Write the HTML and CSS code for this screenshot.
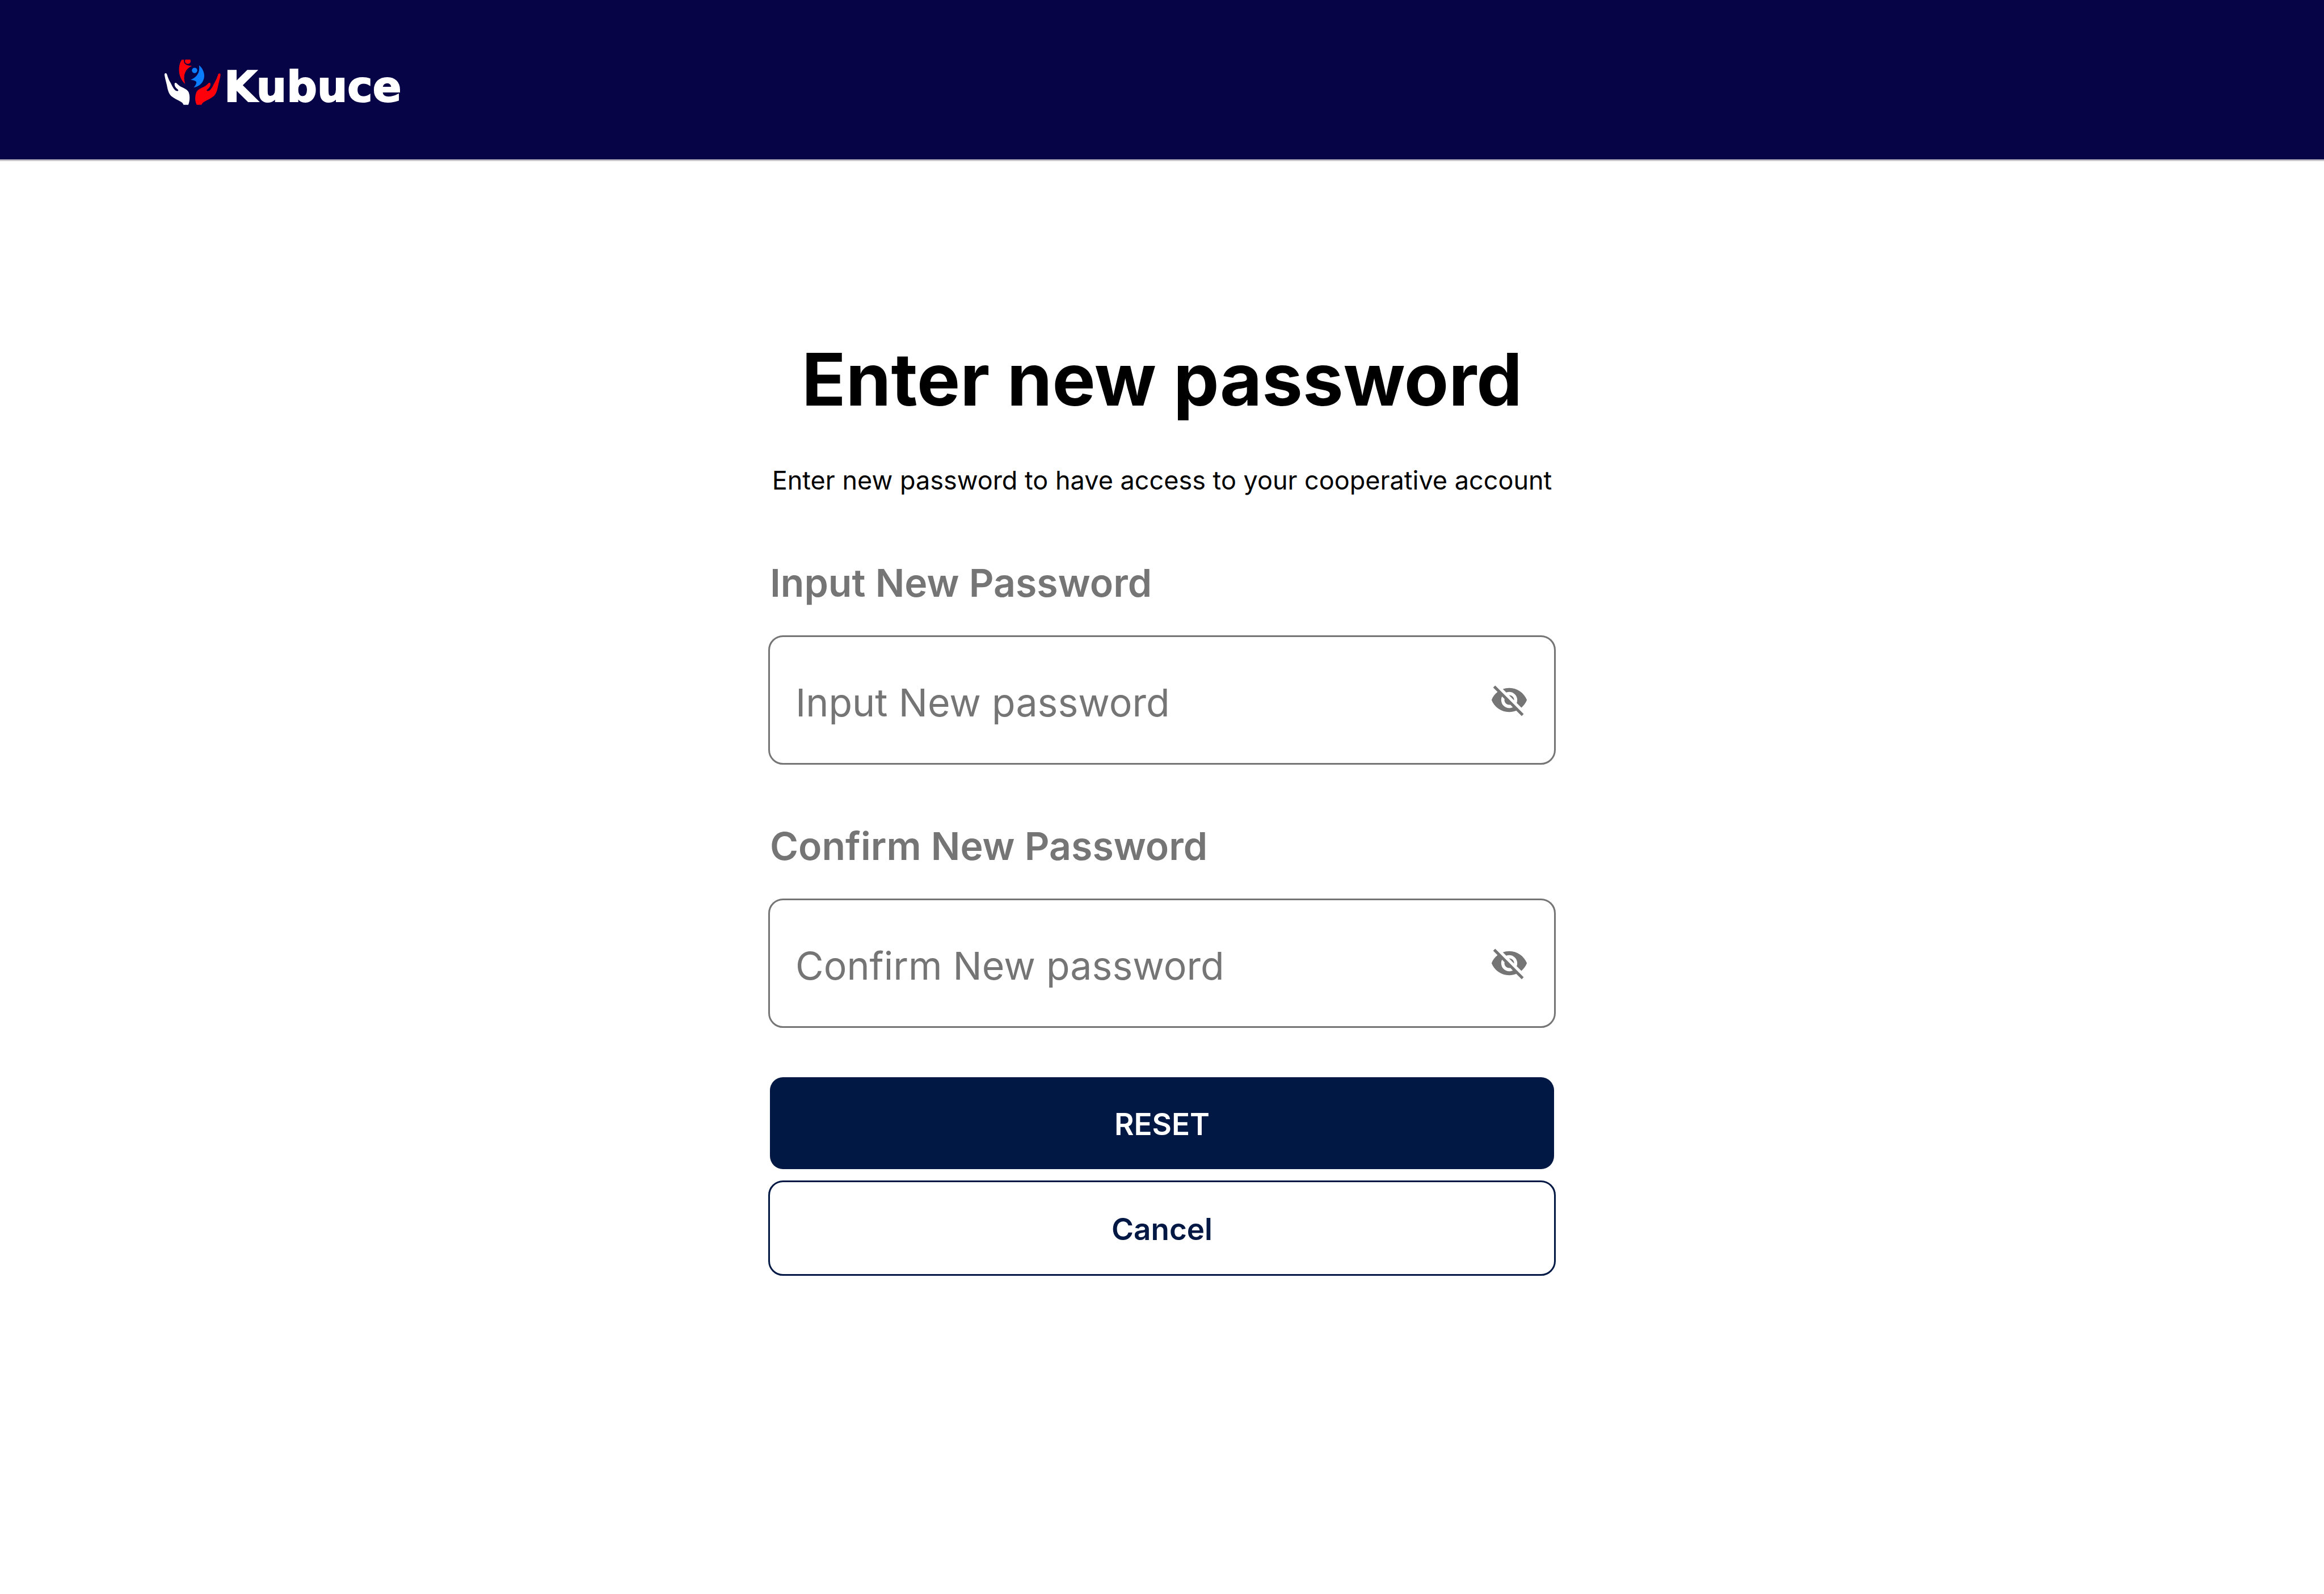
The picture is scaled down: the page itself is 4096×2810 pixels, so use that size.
FILE: index.html
```html
<!DOCTYPE html>
<html lang="en">
<head>
  <meta charset="utf-8">
  <meta name="viewport" content="width=device-width, initial-scale=1">
  <title>Kubuce - Enter new password</title>
  <link rel="stylesheet" href="styles.css">
</head>
<body>
  <header class="site-header">
    <a class="brand" href="#">
      <svg class="brand-mark" viewBox="78 63 314 252" aria-hidden="true">
        <path fill="#fff" d="M84 138C89 138 91 142 93 149C97 163 103 177 110 189C117 201 121 212 127 221C133 230 141 240 152 238C158 235 154 231 150 228C139 219 133 207 134 199C135 191 142 191 147 196C155 203 161 210 172 215C185 221 204 229 212 243C220 259 221 292 211 315H184C181 305 174 300 164 295C150 287 130 279 115 266C100 252 95 227 91 206C87 187 79 161 78 146C78 141 80 138 84 138Z"/>
        <path fill="#ff000b" transform="translate(469 0) scale(-1 1)" d="M84 140C89 140 91 144 93 150C97 163 103 177 110 189C117 201 121 212 127 221C133 230 141 240 152 238C158 235 154 231 150 228C139 219 133 207 134 199C135 191 142 191 147 196C155 203 161 210 172 215C185 221 204 229 212 243C220 259 224 292 211 315H184C181 305 174 300 164 295C150 287 130 279 115 266C100 252 95 227 91 206C87 187 79 161 78 147C78 142 80 140 84 140Z"/>
        <path fill="#ff000b" d="M175 63H187C183 82 194 97 231 97C193 115 179 150 193 198C174 181 159 154 159 119C159 93 166 74 175 63Z"/>
        <circle fill="#ff000b" cx="208" cy="71" r="16"/>
        <circle fill="#0a7cff" cx="246" cy="123" r="15"/>
        <path fill="#0a7cff" d="M271 94C290 109 300 133 300 153C299 187 276 212 241 218C252 207 257 196 256 188C252 179 238 177 223 176C258 162 277 137 271 94Z"/>
      </svg>
      <span class="brand-name">Kubuce</span>
    </a>
  </header>

  <main class="page">
    <form class="reset-form">
      <h1 class="title">Enter new password</h1>
      <p class="subtitle">Enter new password to have access to your cooperative account</p>

      <div class="field">
        <label class="field-label" for="new-password">Input New Password</label>
        <div class="field-box">
          <input class="field-input" id="new-password" type="password" placeholder="Input New password">
          <button class="toggle" type="button" aria-label="Show new password">
            <svg class="toggle-icon" viewBox="0 0 24 24" aria-hidden="true"><path d="M12 7c2.76 0 5 2.24 5 5 0 .65-.13 1.26-.36 1.83l2.92 2.92c1.51-1.26 2.7-2.89 3.43-4.75-1.73-4.39-6-7.5-11-7.5-1.4 0-2.74.25-3.98.7l2.16 2.16C10.74 7.13 11.35 7 12 7zM2 4.27l2.28 2.28.46.46C3.08 8.3 1.78 10.02 1 12c1.73 4.39 6 7.5 11 7.5 1.55 0 3.03-.3 4.38-.84l.42.42L19.73 22 21 20.73 3.27 3 2 4.27zM7.53 9.8l1.55 1.55c-.05.21-.08.43-.08.65 0 1.66 1.34 3 3 3 .22 0 .44-.03.65-.08l1.55 1.55c-.67.33-1.41.53-2.2.53-2.76 0-5-2.24-5-5 0-.79.2-1.53.53-2.2zm4.31-.78l3.15 3.15.02-.16c0-1.66-1.34-3-3-3l-.17.01z"/></svg>
          </button>
        </div>
      </div>

      <div class="field">
        <label class="field-label" for="confirm-password">Confirm New Password</label>
        <div class="field-box">
          <input class="field-input" id="confirm-password" type="password" placeholder="Confirm New password">
          <button class="toggle" type="button" aria-label="Show confirmed password">
            <svg class="toggle-icon" viewBox="0 0 24 24" aria-hidden="true"><path d="M12 7c2.76 0 5 2.24 5 5 0 .65-.13 1.26-.36 1.83l2.92 2.92c1.51-1.26 2.7-2.89 3.43-4.75-1.73-4.39-6-7.5-11-7.5-1.4 0-2.74.25-3.98.7l2.16 2.16C10.74 7.13 11.35 7 12 7zM2 4.27l2.28 2.28.46.46C3.08 8.3 1.78 10.02 1 12c1.73 4.39 6 7.5 11 7.5 1.55 0 3.03-.3 4.38-.84l.42.42L19.73 22 21 20.73 3.27 3 2 4.27zM7.53 9.8l1.55 1.55c-.05.21-.08.43-.08.65 0 1.66 1.34 3 3 3 .22 0 .44-.03.65-.08l1.55 1.55c-.67.33-1.41.53-2.2.53-2.76 0-5-2.24-5-5 0-.79.2-1.53.53-2.2zm4.31-.78l3.15 3.15.02-.16c0-1.66-1.34-3-3-3l-.17.01z"/></svg>
          </button>
        </div>
      </div>

      <div class="actions">
        <button class="btn btn-primary" type="submit">RESET</button>
        <button class="btn btn-outline" type="button">Cancel</button>
      </div>
    </form>
  </main>
</body>
</html>
```
FILE: styles.css
```css
:root {
  --navy: #021844;
  --header: #060446;
  --gray: #757575;
}

* {
  box-sizing: border-box;
}

body {
  margin: 0;
  background: #fff;
  color: #000;
  font-family: Inter, "Open Sans", sans-serif;
}

.site-header {
  padding: 105px 290px 96px;
  border-bottom: 3px solid #c8c5ca;
  background: var(--header);
}

.brand {
  display: flex;
  align-items: flex-start;
  gap: 6px;
  color: #fff;
  text-decoration: none;
}

.brand-mark {
  width: 99px;
  height: 80px;
}

.brand-name {
  height: 80px;
  font-family: "DejaVu Sans", sans-serif;
  font-size: 75px;
  font-weight: 700;
  line-height: 96px;
  -webkit-text-stroke: 2px #fff;
  stroke-linejoin: round;
}

.page {
  display: flex;
  justify-content: center;
  padding: 305px 48px 96px;
}

.reset-form {
  width: 100%;
  max-width: 1388px;
}

.title {
  margin: 0;
  font-size: 128px;
  font-weight: 700;
  line-height: 160px;
  text-align: center;
}

.subtitle {
  margin: 62px 0 100px;
  font-size: 45px;
  line-height: 72px;
  text-align: center;
}

.field + .field {
  margin-top: 99px;
}

.field-label {
  display: block;
  margin-bottom: 49px;
  padding-left: 3px;
  color: var(--gray);
  font-size: 68px;
  font-weight: 600;
  line-height: 88px;
}

.field-box {
  display: flex;
  align-items: center;
  height: 228px;
  padding: 0 45px;
  border: 3px solid var(--gray);
  border-radius: 26px;
}

.field-input {
  flex: 1;
  min-width: 0;
  padding: 8px 0 0;
  border: 0;
  outline: 0;
  background: transparent;
  color: #000;
  font: inherit;
  font-size: 68px;
  line-height: 88px;
}

.field-input::placeholder {
  color: var(--gray);
  opacity: 1;
}

.toggle {
  display: flex;
  padding: 0;
  border: 0;
  background: none;
  color: var(--gray);
  cursor: pointer;
}

.toggle-icon {
  width: 68px;
  height: 68px;
  fill: currentColor;
}

.actions {
  display: grid;
  gap: 17px;
  margin-top: 84px;
}

.btn {
  height: 168px;
  padding: 4px 24px 0;
  border: 3px solid transparent;
  border-radius: 26px;
  font: inherit;
  font-size: 53px;
  font-weight: 600;
  cursor: pointer;
}

.btn-primary {
  background: var(--navy) padding-box;
  color: #fff;
}

.btn-outline {
  border-color: var(--navy);
  background: #fff;
  color: var(--navy);
}
```
